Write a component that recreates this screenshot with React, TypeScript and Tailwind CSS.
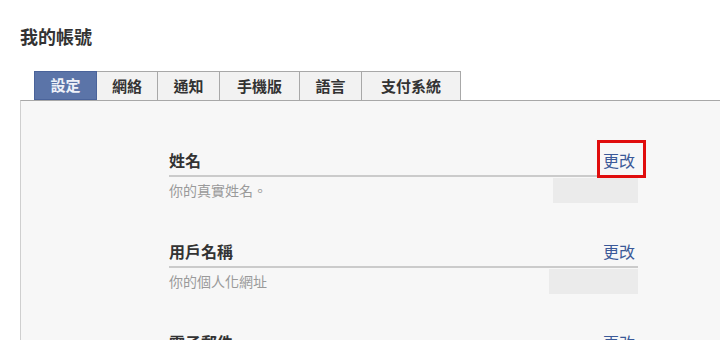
const font = { fontFamily: '"Noto Sans CJK TC", "Noto Sans", sans-serif' };

// ── Tabs ──────────────────────────────────────
const tabs = [
  { label: "設定", w: "w-[63px]", active: true },
  { label: "網絡", w: "w-[61px]" },
  { label: "通知", w: "w-[62px]" },
  { label: "手機版", w: "w-[80px]" },
  { label: "語言", w: "w-[62px]" },
  { label: "支付系統", w: "w-[99px]" },
];

function Tab({ label, w, active }: { label: string; w: string; active?: boolean }) {
  return (
    <div
      className={
        active
          ? `${w} h-[29px] flex items-center justify-center bg-[#5b74a8] text-[#eef1f8] border border-[#4a639a] text-[15px] font-bold`
          : `${w} h-[29px] flex items-center justify-center bg-[#f2f2f2] text-[#333] border-t border-r border-[#a8a8a8] text-[15px] font-bold`
      }
    >
      {label}
    </div>
  );
}

// ── Setting Row ───────────────────────────────
function Row({ title, desc, boxW, marked }: { title: string; desc: string; boxW: string; marked?: boolean }) {
  return (
    <div className="w-[469px]">
      <div className="flex items-end justify-between border-b-2 border-[#cbcbcb] pb-[4px]">
        <span className="text-[16px] font-bold text-[#333] leading-[22px]">{title}</span>
        <span className="relative mr-[3px] text-[16px] text-[#3b5998] leading-[22px]">
          更改
          {marked && <span className="absolute -left-[6px] -right-[11px] -top-[9px] -bottom-[7px] border-[3px] border-[#e00d0d]" />}
        </span>
      </div>
      <div className="flex items-start justify-between">
        <span className="mt-[4px] text-[14px] text-[#9a9a9a] leading-[18px]">{desc}</span>
        <div className={`${boxW} h-[25px] mt-[1px] bg-[#ebebeb]`} />
      </div>
    </div>
  );
}

export default function App() {
  return (
    <div className="w-[720px] h-[340px] bg-white overflow-hidden" style={font}>
      <h1 className="pt-[25px] pl-5 text-[18px] font-bold text-[#333] leading-[22px]">我的帳號</h1>
      <div className="mt-[24px] pl-[34px] flex">
        {tabs.map((t) => (
          <Tab key={t.label} {...t} />
        ))}
      </div>
      <div className="ml-5 h-[300px] border-t border-l border-t-[#a8a8a8] border-l-[#cfcfcf] bg-[#f7f7f7] pl-[148px] pt-[48px] flex flex-col gap-[37px]">
        <Row title="姓名" desc="你的真實姓名。" boxW="w-[85px]" marked />
        <Row title="用戶名稱" desc="你的個人化網址" boxW="w-[89px]" />
        <Row title="電子郵件" desc="" boxW="w-[89px]" />
      </div>
    </div>
  );
}
